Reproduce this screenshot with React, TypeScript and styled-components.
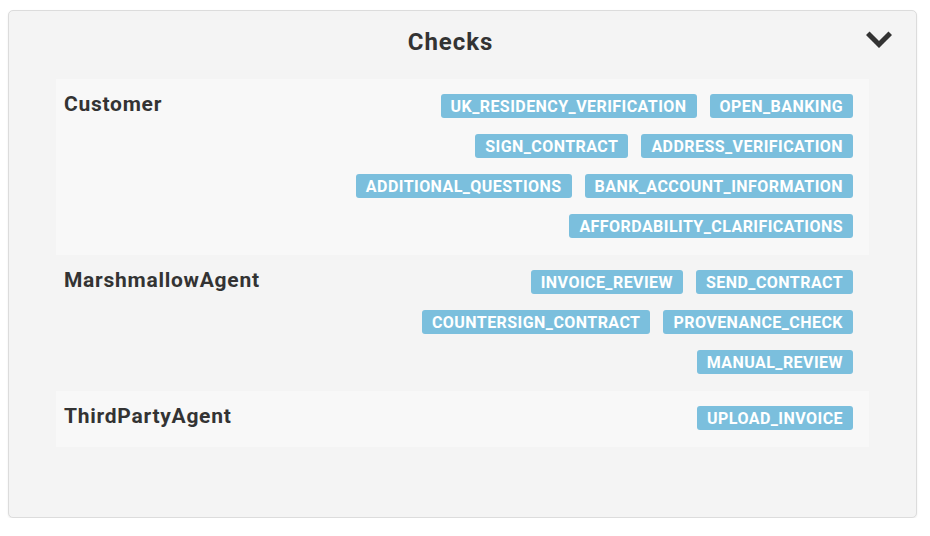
import React from 'react';
import styled, { createGlobalStyle } from 'styled-components';

const GlobalStyle = createGlobalStyle`
  html, body {
    margin: 0;
    padding: 0;
    background: #ffffff;
    font-family: Roboto, "Liberation Sans", Arial, sans-serif;
  }
`;

const Page = styled.div`
  padding: 10px 12px 0 8px;
`;

const Card = styled.section`
  width: 909px;
  height: 508px;
  box-sizing: border-box;
  background: #f4f4f4;
  border: 1px solid #dcdcdc;
  border-radius: 5px;
  box-shadow: 0 1px 2px rgba(0, 0, 0, 0.08);
  padding: 0 47px 72px;
`;

const Header = styled.header`
  position: relative;
  height: 68px;
  box-sizing: border-box;
  padding: 0 24px 6px 0;
  display: flex;
  align-items: center;
  justify-content: center;
`;

const Title = styled.h2`
  margin: 0;
  font-size: 24px;
  font-weight: 700;
  letter-spacing: 0.04em;
  color: #333333;
`;

const Toggle = styled.button`
  position: absolute;
  right: -23px;
  top: 20px;
  width: 26px;
  height: 18px;
  padding: 0;
  border: none;
  background: transparent;
  cursor: pointer;
  display: flex;
  align-items: center;
  justify-content: center;
`;

const Group = styled.div<{ $shaded: boolean }>`
  display: flex;
  align-items: flex-start;
  justify-content: space-between;
  padding: 15px 16px 17px 8px;
  background: ${(p) => (p.$shaded ? '#f8f8f8' : 'transparent')};
`;

const Label = styled.h3`
  margin: -1px 0 0;
  font-size: 21px;
  line-height: 22px;
  font-weight: 700;
  letter-spacing: 0.035em;
  color: #333333;
`;

const Badges = styled.div`
  flex: 1;
  display: flex;
  flex-direction: column;
  gap: 16px;
  padding-left: 40px;
`;

const BadgeRow = styled.div`
  display: flex;
  justify-content: flex-end;
  gap: 13px;
`;

const Badge = styled.span`
  display: inline-flex;
  align-items: center;
  height: 24px;
  padding: 0 10px;
  background: #7bbfdd;
  color: #ffffff;
  border-radius: 3px;
  font-size: 16px;
  font-weight: 700;
  letter-spacing: 0.028em;
`;

const groups = [
  {
    name: 'Customer',
    checks: [
      ['UK_RESIDENCY_VERIFICATION', 'OPEN_BANKING'],
      ['SIGN_CONTRACT', 'ADDRESS_VERIFICATION'],
      ['ADDITIONAL_QUESTIONS', 'BANK_ACCOUNT_INFORMATION'],
      ['AFFORDABILITY_CLARIFICATIONS'],
    ],
  },
  {
    name: 'MarshmallowAgent',
    checks: [
      ['INVOICE_REVIEW', 'SEND_CONTRACT'],
      ['COUNTERSIGN_CONTRACT', 'PROVENANCE_CHECK'],
      ['MANUAL_REVIEW'],
    ],
  },
  {
    name: 'ThirdPartyAgent',
    checks: [['UPLOAD_INVOICE']],
  },
];

const App: React.FC = () => (
  <>
    <GlobalStyle />
    <Page>
      <Card>
        <Header>
          <Title>Checks</Title>
          <Toggle aria-label="Collapse">
            <svg width="26" height="18" viewBox="0 0 26 18">
              <path d="M3.5 4 L13 13.5 L22.5 4" fill="none" stroke="#333" strokeWidth="5" strokeLinecap="square" />
            </svg>
          </Toggle>
        </Header>
        {groups.map((g, i) => (
          <Group key={g.name} $shaded={i % 2 === 0}>
            <Label>{g.name}</Label>
            <Badges>
              {g.checks.map((row) => (
                <BadgeRow key={row.join()}>
                  {row.map((c) => (
                    <Badge key={c}>{c}</Badge>
                  ))}
                </BadgeRow>
              ))}
            </Badges>
          </Group>
        ))}
      </Card>
    </Page>
  </>
);

export default App;
